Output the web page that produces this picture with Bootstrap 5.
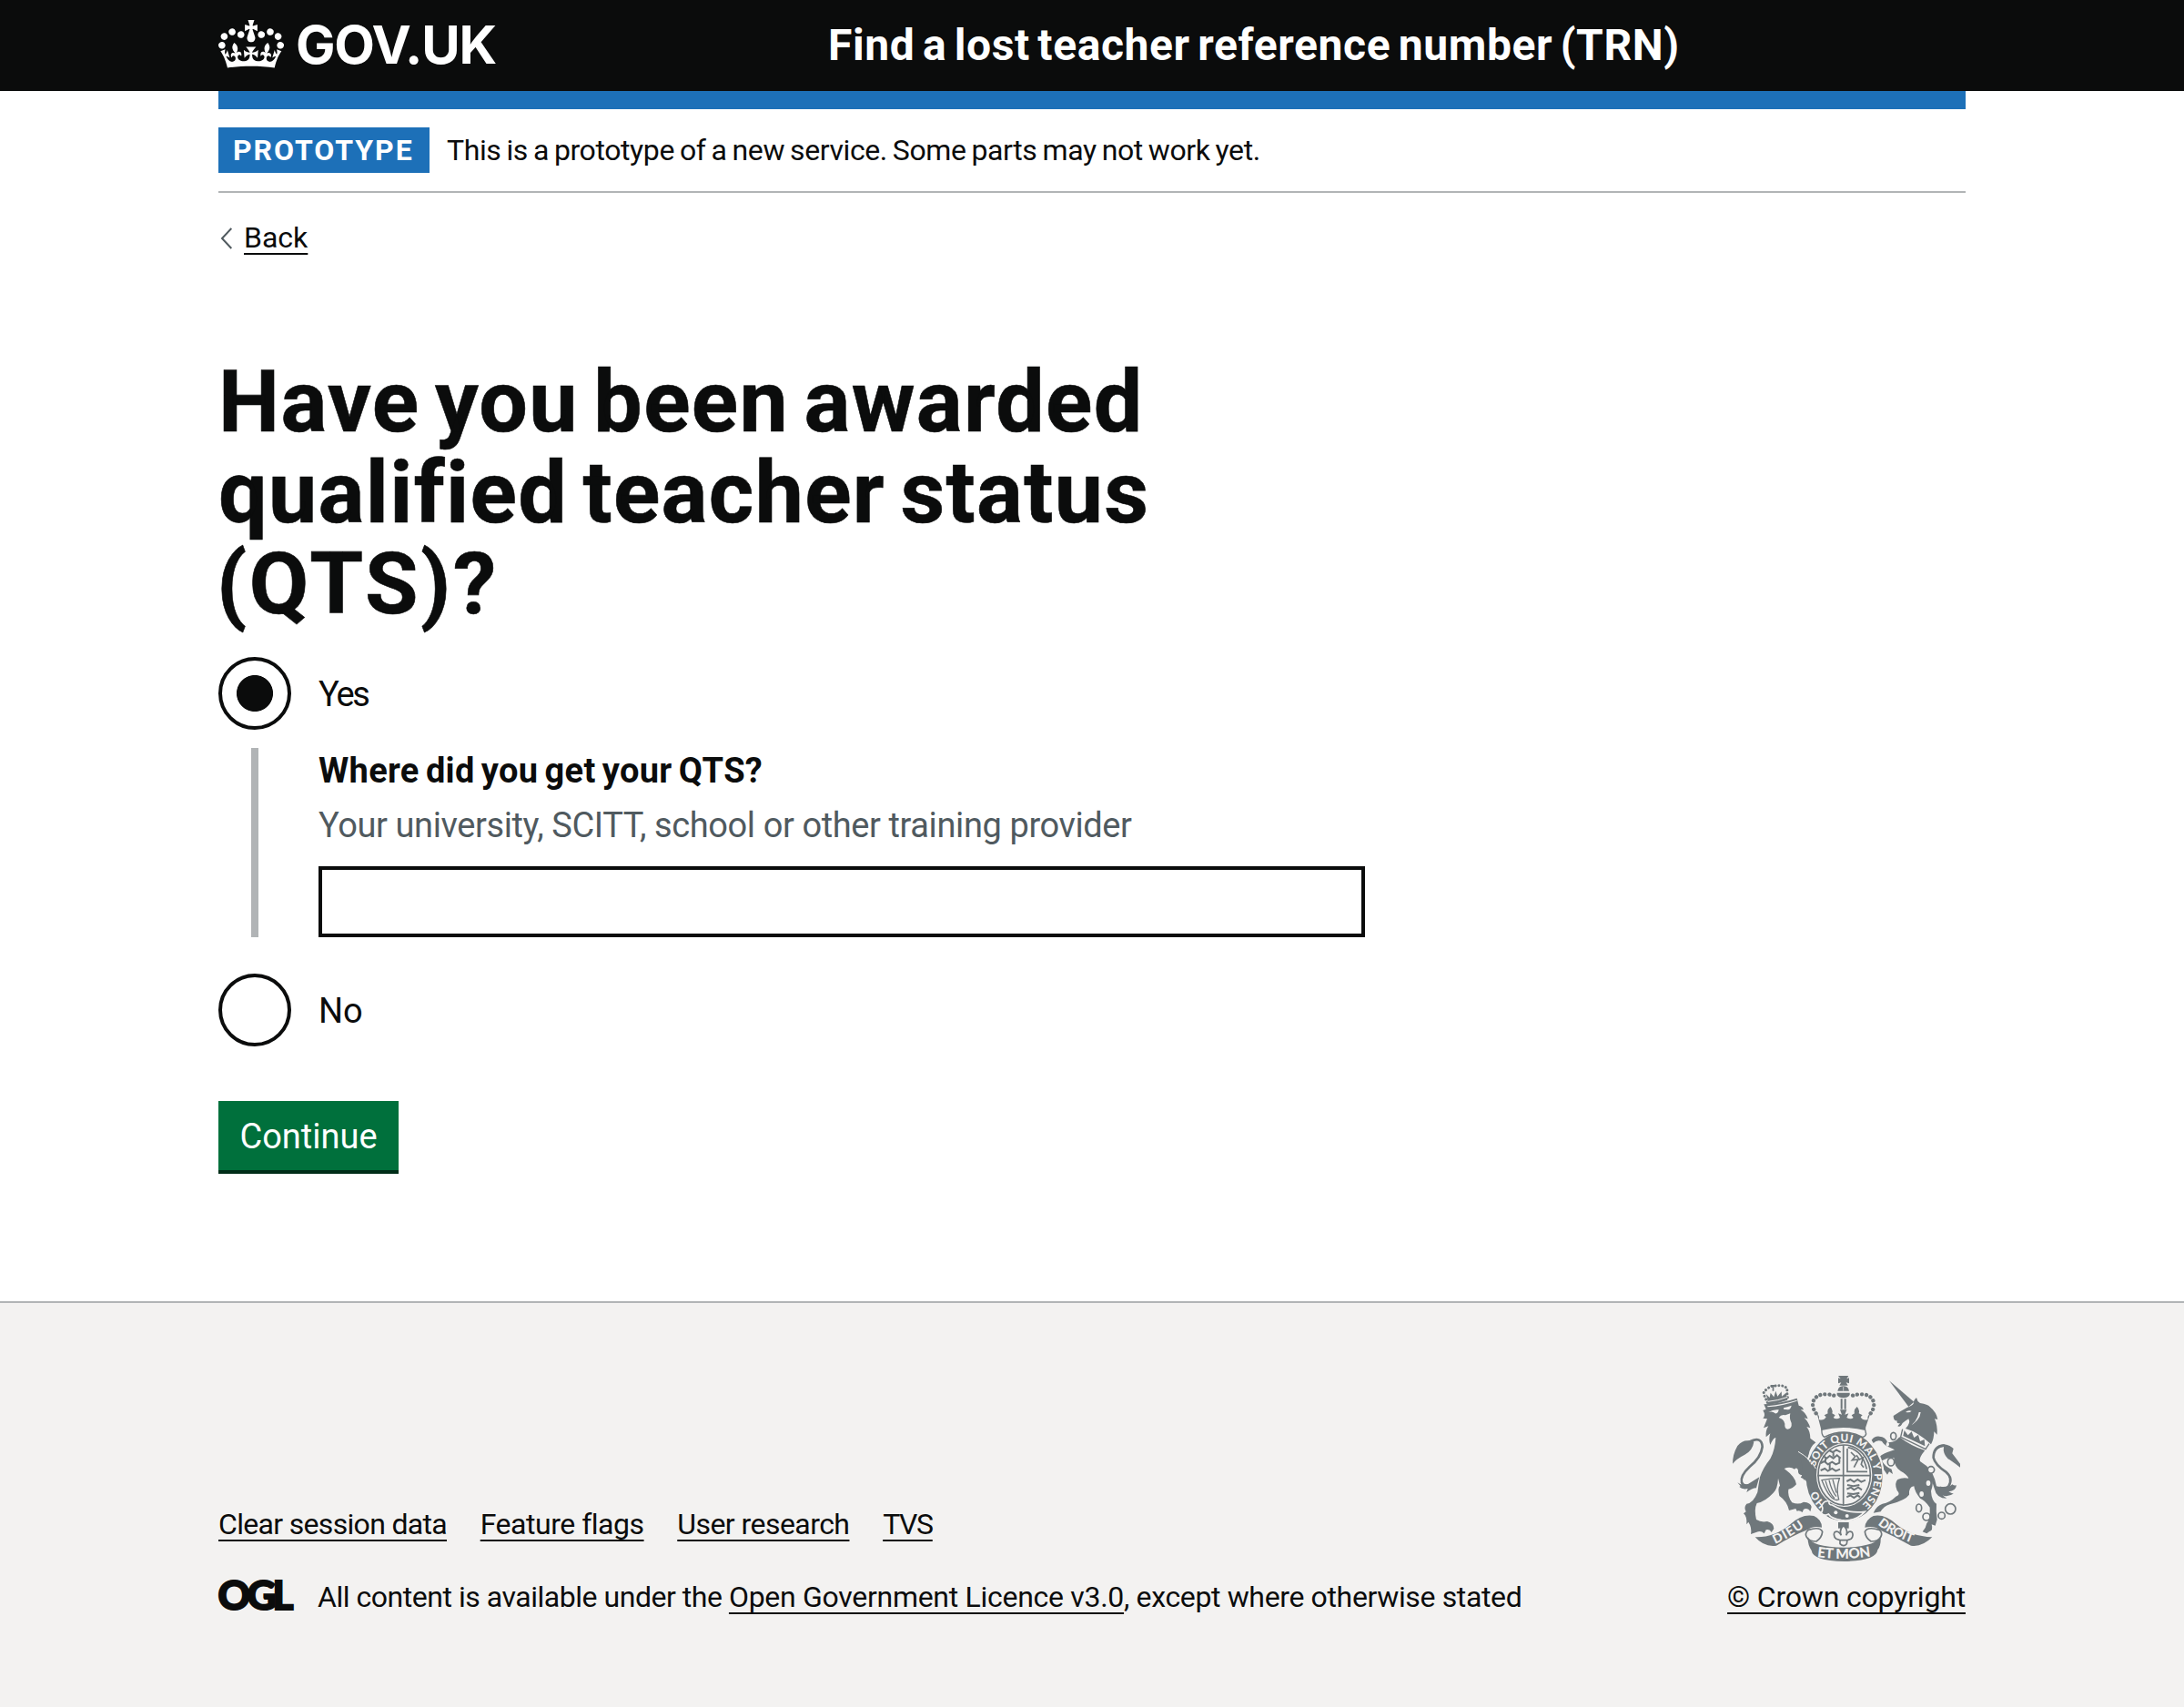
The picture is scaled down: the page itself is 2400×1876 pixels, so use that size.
<!DOCTYPE html>
<html lang="en">
<head>
<meta charset="utf-8">
<meta name="viewport" content="width=device-width, initial-scale=1">
<title>Have you been awarded qualified teacher status (QTS)?</title>
<link href="https://cdn.jsdelivr.net/npm/bootstrap@5.3.0/dist/css/bootstrap.min.css" rel="stylesheet">
<style>
  :root { --ink: #0b0c0c; --blue: #1d70b8; --line: #b1b4b6; --crest: #6f777b; --pale: #f3f2f1; }
  body { font-family: Roboto, "Liberation Sans", sans-serif; color: var(--ink); font-size: 32px; line-height: 40px; background: #fff; }
  .page-width { width: 1920px; margin: 0 auto; }
  .masthead { background: var(--ink); height: 100px; color: #fff; }
  .brand-col { width: 670px; }
  .brand-crown { width: 72px; height: 53px; margin-top: -4px; }
  .brand-name { font: 700 58px/98px Inter, sans-serif; letter-spacing: -1.2px; margin-left: 13px; height: 100px; }
  .service-name { font-size: 48px; line-height: 100px; font-weight: 700; letter-spacing: .6px; word-spacing: -4px; }
  .blue-bar { height: 20px; background: var(--blue); }
  .phase { padding: 20px 0; border-bottom: 2px solid var(--line); }
  .phase-tag { background: var(--blue); color: #fff; font-weight: 700; width: 232px; height: 50px; line-height: 50px; padding-left: 16px; letter-spacing: 1.95px; }
  .phase-text { line-height: 50px; margin-left: 19px; letter-spacing: -.41px; word-spacing: -1.5px; }
  .ul-link, .ul-link:hover { color: var(--ink); text-decoration: underline; text-decoration-thickness: 2px; text-underline-offset: 6px; text-decoration-skip-ink: none; }
  .back-row { margin-top: 29px; height: 40px; }
  .back-row svg { width: 28px; height: 40px; }
  .question { font-size: 95px; line-height: 100px; font-weight: 700; margin: 111px 0 30px; letter-spacing: 1.35px; word-spacing: -8.5px; -webkit-text-stroke: .6px var(--ink); }
  .question .l3 { letter-spacing: 2.6px; margin-left: -2px; }
  .choice { height: 80px; font-size: 38px; }
  .choice label { margin-left: 30px; padding-top: 2px; }
  .choice .form-check-input { width: 80px; height: 80px; border: 4px solid var(--ink); margin: 0; background: #fff none; }
  .choice .form-check-input:checked { background: radial-gradient(circle, var(--ink) 19.6px, #fff 20.4px); border-color: var(--ink); }
  .reveal { margin: 20px 0 40px 36px; border-left: 8px solid var(--line); padding-left: 66px; font-size: 38px; line-height: 50px; }
  .reveal-label { font-weight: 700; letter-spacing: .3px; word-spacing: -2.5px; }
  .reveal-hint { color: #505a5f; margin: 10px 0 20px; letter-spacing: -.4px; }
  .reveal .form-control { width: 1150px; height: 78px; border: 4px solid var(--ink); }
  .go-btn { width: 198px; height: 76px; margin-top: 60px; padding: 2px 0 0; background: #00703c; color: #fff; font-size: 38px; line-height: 74px; border: 0; box-shadow: 0 4px 0 #002d18; }
  .site-foot { margin-top: 144px; border-top: 2px solid var(--line); background: var(--pale); height: 446px; padding-top: 80px; }
  .foot-links { gap: 36.7px; margin-bottom: 40px; }
  .ogl { width: 82px; height: 34px; margin: 1px 27px 0 0; overflow: visible; }
  .crest { width: 250px; height: 204px; margin: 0 6px 19px 0; }
</style>
<script src="https://cdn.jsdelivr.net/npm/bootstrap@5.3.0/dist/js/bootstrap.bundle.min.js"></script>
</head>
<body>
<header class="masthead">
  <div class="page-width d-flex align-items-center">
    <div class="brand-col d-flex align-items-center">
      <svg class="brand-crown" viewBox="0 0 132 97" preserveAspectRatio="none" fill="#fff" aria-hidden="true"><path d="M25 30.2c3.5 1.5 7.7-.2 9.1-3.7 1.5-3.6-.2-7.8-3.9-9.2-3.6-1.4-7.6.3-9.1 3.9-1.4 3.5.3 7.5 3.9 9zM9 39.5c3.6 1.5 7.8-.2 9.2-3.7 1.5-3.6-.2-7.8-3.9-9.1-3.6-1.5-7.6.2-9.1 3.8-1.4 3.5.3 7.5 3.8 9zM4.4 57.2c3.5 1.5 7.7-.2 9.1-3.8 1.5-3.6-.2-7.7-3.9-9.1-3.5-1.5-7.6.3-9.1 3.8-1.4 3.5.3 7.6 3.9 9.1zm38.3-21.4c3.5 1.5 7.7-.2 9.1-3.8 1.5-3.6-.2-7.7-3.9-9.1-3.6-1.5-7.6.3-9.1 3.8-1.3 3.6.4 7.7 3.9 9.1zm64.4-5.6c-3.6 1.5-7.8-.2-9.1-3.7-1.5-3.6.2-7.8 3.8-9.2 3.6-1.4 7.7.3 9.2 3.9 1.3 3.5-.4 7.5-3.9 9zm15.9 9.3c-3.6 1.5-7.7-.2-9.1-3.7-1.5-3.6.2-7.8 3.7-9.1 3.6-1.5 7.7.2 9.2 3.8 1.5 3.5-.3 7.5-3.8 9zm4.7 17.7c-3.6 1.5-7.8-.2-9.2-3.8-1.5-3.6.2-7.7 3.9-9.1 3.6-1.5 7.7.3 9.2 3.8 1.3 3.5-.4 7.6-3.9 9.1zM89.3 35.8c-3.6 1.5-7.8-.2-9.2-3.8-1.4-3.6.2-7.7 3.9-9.1 3.6-1.5 7.7.3 9.2 3.8 1.4 3.6-.3 7.7-3.9 9.1zM69.7 17.7l8.9 4.7V9.3l-8.9 2.8c-.2-.3-.5-.6-.9-.9L72.4 0H59.6l3.5 11.2c-.3.3-.6.5-.9.9l-8.8-2.8v13.1l8.8-4.7c.3.3.6.7.9.9l-5 15.4v.1c-.2.8-.4 1.6-.4 2.4 0 4.1 3.1 7.5 7 8.1h.2c.3 0 .7.1 1 .1.4 0 .7 0 1-.1h.2c4-.6 7.1-4.1 7.1-8.1 0-.8-.1-1.7-.4-2.4V34l-5.1-15.4c.4-.2.7-.6 1-.9zM66 92.8c16.9 0 32.8 1.1 47.1 3.2 4-16.9 8.9-26.7 14-33.5l-9.6-3.4c1 4.9 1.1 7.2 0 10.2-1.5-1.4-3-4.3-4.2-8.7L108.6 76c2.8-2 5-3.2 7.5-3.3-4.4 9.4-10 11.9-13.6 11.2-4.3-.8-6.3-4.6-5.6-7.9 1-4.7 5.7-5.9 8-.5 4.3-8.7-3-11.4-7.6-8.8 7.1-7.2 7.9-13.5 2.1-21.1-8 6.1-8.1 12.3-4.5 20.8-4.7-5.4-12.1-2.5-9.5 6.2 3.4-5.2 7.9-2 7.2 3.1-.6 4.3-6.4 7.8-13.5 7.2-10.3-.9-10.9-8-11.2-13.8 2.5-.5 7.1 1.8 11 7.3L80.2 60c-4.1 4.4-8 5.3-12.3 5.4 1.4-4.4 8-11.6 8-11.6H55.5s6.4 7.2 7.9 11.6c-4.2-.1-8-1-12.3-5.4l1.4 16.4c3.9-5.5 8.5-7.7 10.9-7.3-.3 5.8-.9 12.8-11.1 13.8-7.2.6-12.9-2.9-13.5-7.2-.7-5 3.8-8.3 7.1-3.1 2.7-8.7-4.6-11.6-9.4-6.2 3.7-8.5 3.6-14.7-4.6-20.8-5.8 7.6-5 13.9 2.2 21.1-4.7-2.6-11.9.1-7.7 8.8 2.3-5.5 7.1-4.2 8.1.5.7 3.3-1.3 7.1-5.7 7.9-3.5.7-9-1.8-13.5-11.2 2.5.1 4.7 1.3 7.5 3.3l-4.7-15.4c-1.2 4.4-2.7 7.2-4.3 8.7-1.1-3-.9-5.3 0-10.2l-9.5 3.4c5 6.9 9.9 16.7 14 33.5 14.8-2.1 30.8-3.2 47.7-3.2z"/></svg>
      <span class="brand-name">GOV.UK</span>
    </div>
    <span class="service-name text-nowrap">Find a lost teacher reference number (TRN)</span>
  </div>
</header>

<main class="page-width">
  <div class="blue-bar"></div>
  <div class="phase d-flex">
    <strong class="phase-tag">PROTOTYPE</strong>
    <span class="phase-text">This is a prototype of a new service. Some parts may not work yet.</span>
  </div>
  <div class="back-row d-flex">
    <svg viewBox="0 0 28 40" fill="none" stroke="#505a5f" stroke-width="2" aria-hidden="true"><path d="M14.3 10 4 21l10.3 11"/></svg>
    <a class="ul-link" href="#">Back</a>
  </div>

  <form onsubmit="return false">
    <h1 class="question"><span class="d-block">Have you been awarded</span> <span class="d-block">qualified teacher status</span> <span class="d-block l3">(QTS)?</span></h1>
    <div class="choice d-flex align-items-center">
      <input class="form-check-input flex-shrink-0" type="radio" name="qts" id="qts-yes" checked>
      <label for="qts-yes" style="letter-spacing:-2.2px">Yes</label>
    </div>
    <div class="reveal">
      <label class="reveal-label d-block" for="provider">Where did you get your QTS?</label>
      <div class="reveal-hint">Your university, SCITT, school or other training provider</div>
      <input class="form-control rounded-0" id="provider" type="text">
    </div>
    <div class="choice d-flex align-items-center">
      <input class="form-check-input flex-shrink-0" type="radio" name="qts" id="qts-no">
      <label for="qts-no">No</label>
    </div>
    <button class="btn go-btn rounded-0 d-block" type="submit">Continue</button>
  </form>
</main>

<footer class="site-foot">
  <div class="page-width d-flex justify-content-between align-items-end">
    <div>
      <nav class="foot-links d-flex">
        <a class="ul-link" href="#" style="letter-spacing:-.68px">Clear session data</a>
        <a class="ul-link" href="#" style="letter-spacing:-.48px">Feature flags</a>
        <a class="ul-link" href="#" style="letter-spacing:-.55px">User research</a>
        <a class="ul-link" href="#" style="letter-spacing:-1.37px">TVS</a>
      </nav>
      <div class="d-flex">
        <svg class="ogl" viewBox="0 0 82 34" aria-label="OGL"><text x="-.5" y="32.5" font-family="Lato, sans-serif" font-weight="900" font-size="44" textLength="83" lengthAdjust="spacing" fill="#0b0c0c" stroke="#0b0c0c" stroke-width="2">OGL</text></svg>
        <div class="text-nowrap"><span style="letter-spacing:-.47px">All content is available under the </span><a class="ul-link" href="#" style="letter-spacing:-.29px">Open Government Licence v3.0</a><span style="letter-spacing:-.36px">, except where otherwise stated</span></div>
      </div>
    </div>
    <div class="d-flex flex-column align-items-end">
      <svg class="crest" viewBox="72 66 750 612" fill="#6f777b" aria-hidden="true">
        <defs>
          <path id="garter" d="M440 513A99 115 0 0 1 440 283A99 115 0 0 1 440 513"/>
          <path id="scrollL" d="M212 621Q265 598 318 557"/>
          <path id="scrollR" d="M550 556Q600 596 672 620"/>
          <path id="scrollC" d="M346 662Q440 676 534 660"/>
        </defs>
        <!-- lion: tail, body, crown -->
        <path d="M72 356Q72 325 88 297Q104 278 124 280Q138 277 142 284Q138 312 112 326Q84 340 72 356Z"/>
        <path d="M125 285Q168 262 170 300Q166 335 128 366Q96 396 102 418Q112 440 152 414" fill="none" stroke="#6f777b" stroke-width="8"/>
        <path d="M88 418Q105 432 124 422L160 400L150 436Q136 436 118 450L122 438Q104 442 94 432L98 430Z"/>
        <path d="M175 160Q230 158 284 140L290 164Q304 168 306 178L296 178Q312 186 320 208L308 205Q322 218 328 238L316 234Q328 250 328 272L346 286Q326 300 322 330Q346 350 348 410Q340 420 334 410L328 424L318 408L312 418Q306 402 296 402L302 394Q286 392 288 378Q284 366 276 374Q262 364 242 372Q280 400 282 424Q270 438 256 440Q252 462 268 484Q290 492 306 482Q330 484 332 498L328 514Q320 500 306 506L302 516Q292 508 284 512L280 504L258 510Q252 480 226 462Q220 434 228 428Q224 412 222 404Q220 440 206 452Q180 480 152 486Q142 506 150 540Q166 550 186 546Q208 552 208 570L200 582Q194 570 182 574L176 586Q166 576 156 580L132 588Q136 566 124 548L118 556Q120 530 108 520L116 514Q108 500 118 488Q140 486 154 450Q158 420 162 400Q172 370 196 340Q212 310 214 270Q206 270 196 294Q190 276 196 256L182 268Q180 246 190 232L174 238L186 208L172 206Q182 196 172 180L182 176Z"/>
        <path d="M187 154L175 128Q172 116 184 112Q194 100 206 100Q230 96 242 101Q254 106 251 120L254 142" fill="none" stroke="#6f777b" stroke-width="9" stroke-linecap="round" stroke-dasharray=".1 11.5"/>
        <path d="M189 158L186 140L182 126L194 138L197 122L208 136L214 116L220 134L233 118L234 134L248 122L253 146Q220 158 189 162ZM197 96h16v6h-5v14h-5v-14h-6z"/>
        <path d="M188 151Q222 148 253 136" fill="none" stroke="#f3f2f1" stroke-width="3"/>
        <g fill="#f3f2f1"><path d="M190 186Q206 176 224 178Q222 192 212 190Q204 182 190 186ZM240 172Q256 168 266 164Q264 176 254 178L240 176Z"/><path d="M224 204Q232 192 246 196L262 190Q258 206 266 222Q268 240 254 242Q242 240 244 224Q240 208 224 204Z"/><path d="M186 166Q240 160 284 146L284 149Q240 164 188 169Z"/></g>
        <!-- unicorn: horn, head, coronet, body, tail -->
        <path d="M588 82L670 152L652 168Z"/>
        <path d="M602 198Q622 184 648 170Q664 164 668 158Q668 146 678 138Q680 150 690 156Q716 160 722 168Q744 186 748 210L738 208Q748 230 746 260L736 250Q736 274 726 292Q684 252 642 240Q660 222 652 208Q642 214 632 222Q626 236 616 232L624 222Q612 226 614 214Q602 216 602 198Z"/>
        <path d="M642 186Q650 178 662 182Q656 188 642 186ZM692 186Q690 214 650 236Q680 220 686 186Z" fill="#f3f2f1"/>
        <path d="M632 242L626 268L708 308L720 290" fill="none" stroke="#6f777b" stroke-width="4"/>
        <path d="M634 264L638 246L650 262L662 250L670 270L684 260L690 282L704 276L706 298Z"/>
        <path d="M622 268Q660 298 706 312Q684 338 690 348Q724 370 728 390Q736 420 726 446Q728 478 744 488Q742 510 746 540L740 560L728 556Q734 576 720 580L712 586L698 580Q710 566 712 552Q724 540 722 500Q706 476 690 470Q672 448 670 430Q652 432 654 458Q642 476 590 490Q570 496 560 514L536 518Q546 494 566 488Q590 484 610 464Q628 458 614 444Q604 420 616 408Q632 400 652 404Q646 390 626 380Q604 366 604 336Q584 334 564 346Q574 366 596 374L600 390L588 382L582 392L572 378Q560 372 548 342Q560 326 582 318L606 310L590 302Q572 296 564 282Q548 276 536 288L530 278Q540 264 556 266Q576 266 582 286Q602 286 614 276Z"/>
        <path d="M734 314Q746 290 770 292Q790 296 800 306L796 322L822 356V368Q790 344 782 340Q764 322 768 300Q744 302 738 322Z"/>
        <path d="M770 296Q734 298 734 336Q740 360 774 382Q800 404 784 430Q774 440 754 434" fill="none" stroke="#6f777b" stroke-width="8"/>
        <path d="M708 360Q736 384 744 430Q780 440 796 424Q804 430 810 426Q808 446 784 448Q796 456 802 454Q780 468 764 460L778 470Q744 470 738 440Q726 400 708 360Z"/>
        <g fill="#f3f2f1" stroke="#6f777b" stroke-width="5"><ellipse cx="602" cy="265" rx="9" ry="12"/><ellipse cx="594" cy="350" rx="11" ry="13"/><circle cx="726" cy="376" r="11"/><ellipse cx="686" cy="502" rx="9" ry="13"/><circle cx="711" cy="531" r="12"/><circle cx="761" cy="527" r="11"/><circle cx="790" cy="505" r="17"/></g>
        <g fill="#f3f2f1"><ellipse cx="717" cy="420" rx="7" ry="9"/><ellipse cx="695" cy="456" rx="7" ry="9"/><ellipse cx="583" cy="292" rx="5" ry="7"/></g>
        <!-- garter and shield -->
        <ellipse cx="440" cy="398" rx="129" ry="149" stroke="#f3f2f1" stroke-width="6"/>
        <ellipse cx="440" cy="393" rx="92" ry="105" fill="#f3f2f1"/>
        <ellipse cx="440" cy="393" rx="86" ry="99" fill="none" stroke="#6f777b" stroke-width="5"/>
        <path d="M437 294v200M352 395h176" fill="none" stroke="#6f777b" stroke-width="5"/>
        <g fill="none" stroke="#6f777b" stroke-width="6">
          <path d="M370 330l12 8 10-8 12 8 12-10 12 10M390 312l12 6 12-8 14 8M362 354l12-6 12 10 14-8 12 8 14-6M362 378l14-6 10 8 14-8 12 8 14-6M378 336v14M404 316v16M424 334v18M392 356v18"/>
          <path d="M450 306v76h66M452 302Q500 312 514 374M462 318l14 14-10 12 20-2-14 26M480 328l10 14 12-6-6 22 8 10" stroke-width="5"/>
          <path d="M448 414l12-6 12 8 12-8 12 8 14-6M448 440l14-6 10 8 14-8 12 8M448 466l12-6 12 8 12-8 8 6M450 426l20 4 20-4M450 454l20 2 20-4"/>
          <path d="M366 410Q396 404 424 404Q412 440 422 474Q396 486 366 410ZM378 412Q390 454 408 470M390 410Q398 446 414 464M402 408L414 452" stroke-width="4"/>
        </g>
        <g font-family="Lato, sans-serif" font-weight="900" fill="#f3f2f1" font-size="35">
          <text><textPath href="#garter" startOffset="66">HO</textPath></text>
          <text><textPath href="#garter" startOffset="200" textLength="408">SOIT QUI MAL Y PENSE</textPath></text>
        </g>
        <path d="M366 494Q374 476 390 480Q388 492 400 492Q450 522 508 514Q476 548 430 542Q396 536 388 522Q372 530 364 518Q372 506 366 494Z" stroke="#f3f2f1" stroke-width="5"/>
        <g fill="#f3f2f1"><circle cx="412" cy="517" r="6"/><circle cx="449" cy="528" r="6"/></g>
        <path d="M288 318Q340 344 346 410L336 426L328 416L322 424L312 410L298 400Q312 380 288 318Z"/>
        <path d="M288 316Q330 340 346 372" fill="none" stroke="#f3f2f1" stroke-width="3"/>
        <!-- royal crown -->
        <path d="M420 66h34l-6 10 8-3v18l-10-3 6 10h-28l6-10-10 3V73l8 3zM418 116Q420 100 437 100Q454 100 456 116ZM416 122h42v7q-6 10-21 10t-21-10zM428 142h6v34h-6zM440 142h6v34h-6z"/>
        <path d="M437 102v14" fill="none" stroke="#f3f2f1" stroke-width="2"/>
        <path d="M347 190C322 155 344 127 376 127Q396 127 412 133M527 190C552 155 530 127 498 127Q478 127 462 133" fill="none" stroke="#6f777b" stroke-width="13" stroke-linecap="round" stroke-dasharray=".1 14.8"/>
        <path d="M350 190Q360 200 356 210Q372 216 380 202L374 196L386 190Q382 178 394 168Q404 178 400 190L410 196L404 204Q414 212 426 204L420 190L432 194L426 178H448L442 194L454 190L448 204Q462 212 470 204L464 196L474 190Q470 178 482 168Q492 178 488 190L500 196L494 202Q502 216 518 210Q514 200 526 190L508 244Q440 226 364 244Z"/>
        <path d="M366 240Q436 222 508 240L512 258Q508 268 500 268Q440 236 374 268Q364 262 366 240Z" fill="#f3f2f1" stroke="#6f777b" stroke-width="4"/>
        <path d="M364 242Q436 224 510 242" fill="none" stroke="#6f777b" stroke-width="8"/>
        <!-- pendant fleur-de-lis -->
        <path d="M420 549h35v20h-35z"/>
        <path d="M437 560Q454 574 446 592Q454 574 466 582Q472 594 462 604L450 608L448 620Q438 632 426 620L426 608L414 604Q402 594 408 582Q420 574 430 592Q422 574 437 560ZM424 608H450" fill="#f3f2f1" stroke="#6f777b" stroke-width="5"/>
        <!-- motto scroll -->
        <path d="M146 598Q210 600 262 556Q300 520 340 528Q366 540 366 566Q336 560 322 572Q266 594 216 626Q176 632 146 598ZM730 598Q660 596 612 556Q574 520 536 528Q510 540 508 566Q540 560 556 574Q606 596 660 626Q696 632 730 598Z"/>
        <path d="M322 574Q308 584 316 598Q324 612 348 612Q366 600 368 580Q360 562 322 574ZM556 574Q568 584 560 598Q552 612 528 612Q510 600 508 580Q516 562 556 574Z" fill="#f3f2f1" stroke="#6f777b" stroke-width="5"/>
        <path d="M320 596Q330 630 440 632Q548 630 560 592Q562 626 550 640Q546 676 440 678Q336 676 332 642Q318 620 320 596Z"/>
        <g font-family="Lato, sans-serif" font-weight="900" fill="#f3f2f1" font-size="42">
          <text><textPath href="#scrollL" textLength="112">DIEU</textPath></text>
          <text><textPath href="#scrollR" textLength="128">DROIT</textPath></text>
          <text font-size="46"><textPath href="#scrollC" startOffset="4" textLength="178">ET MON</textPath></text>
        </g>
      </svg>
      <a class="ul-link" href="#" style="letter-spacing:-.18px">© Crown copyright</a>
    </div>
  </div>
</footer>
</body>
</html>
